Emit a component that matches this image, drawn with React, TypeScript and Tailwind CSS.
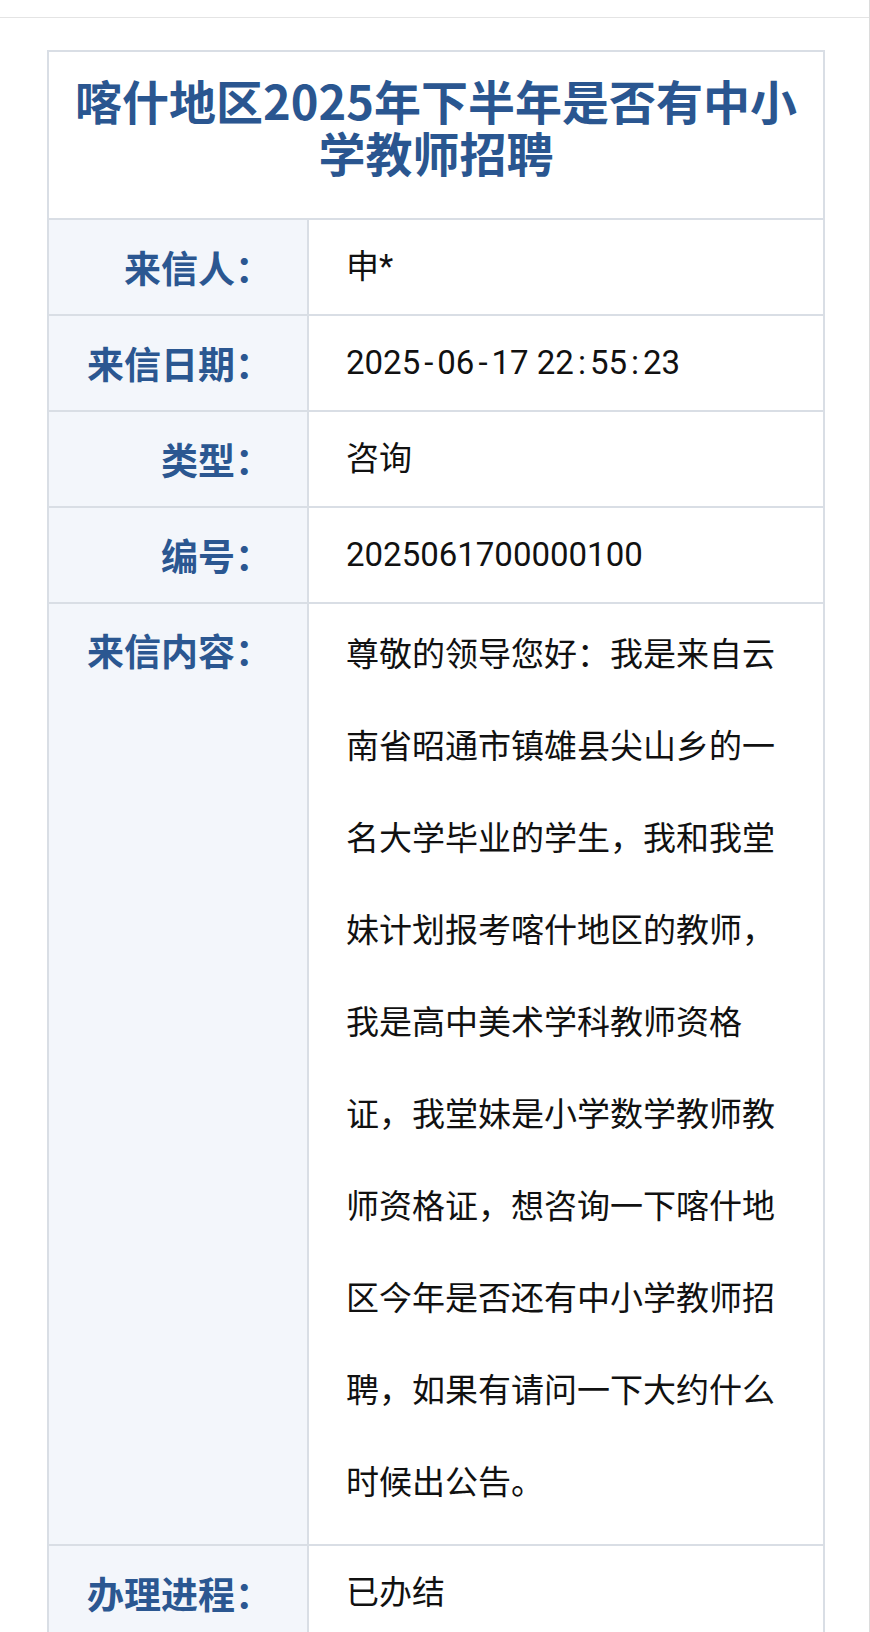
const rows = [
  { label: "来信人：", value: "申*" },
  { label: "来信日期：", value: "2025-06-17 22:55:23" },
  { label: "类型：", value: "咨询" },
  { label: "编号：", value: "2025061700000100" },
];

const content =
  "尊敬的领导您好：我是来自云南省昭通市镇雄县尖山乡的一名大学毕业的学生，我和我堂妹计划报考喀什地区的教师，我是高中美术学科教师资格证，我堂妹是小学数学教师教师资格证，想咨询一下喀什地区今年是否还有中小学教师招聘，如果有请问一下大约什么时候出公告。";

const font = "font-['Noto_Sans_CJK_SC','Noto_Sans',sans-serif]";

// the date's separators sit wider apart in the original
const spaced = (v: string) =>
  v.split(/([-:])/).map((part, i) =>
    part === "-" || part === ":" ? (
      <span key={i} className="mx-[4px]">{part}</span>
    ) : (
      part
    )
  );

const Row = ({ label, value }: { label: string; value: string }) => (
  <div className="flex h-[96px] border-t-2 border-[#d9dee5]">
    <div className="w-[260px] shrink-0 bg-[#f3f6fb] border-r-2 border-[#d9dee5] flex items-center justify-end pr-[35px]">
      <span className="text-[37px] leading-[48px] font-bold text-[#2b5791]">{label}</span>
    </div>
    <div className="flex-1 flex items-center pl-[37px] pr-[38px]">
      <span className="font-['Roboto','Noto_Sans_CJK_SC',sans-serif] text-[33px] leading-[48px] text-[#111]">{spaced(value)}</span>
    </div>
  </div>
);

export default function App() {
  return (
    <div className={`w-[870px] min-h-[1632px] bg-white border-r border-[#dcdcdc] overflow-hidden ${font}`}>
      <div className="h-[18px] border-b border-[#e4e4e4]" />
      <div className="ml-[47px] mt-[32px] w-[778px] border-2 border-b-0 border-[#d9dee5]">
        {/* title */}
        <div className="pt-[22px] pb-[40px] px-4 text-center">
          <h1 className="text-[47px] leading-[52px] font-bold text-[#2a5690]">
            喀什地区2025年下半年是否有中小学教师招聘
          </h1>
        </div>

        {rows.map((r) => (
          <Row key={r.label} label={r.label} value={r.value} />
        ))}

        {/* letter body */}
        <div className="flex border-t-2 border-[#d9dee5]">
          <div className="w-[260px] shrink-0 bg-[#f3f6fb] border-r-2 border-[#d9dee5] flex justify-end pr-[35px] pt-[22px]">
            <span className="text-[37px] leading-[48px] font-bold text-[#2b5791]">来信内容：</span>
          </div>
          <div className="flex-1 pl-[37px] pr-[36px] pt-[2px] pb-[18px]">
            <p className="text-[33px] leading-[92px] text-[#111]">{content}</p>
          </div>
        </div>

        <Row label="办理进程：" value="已办结" />
      </div>
    </div>
  );
}
